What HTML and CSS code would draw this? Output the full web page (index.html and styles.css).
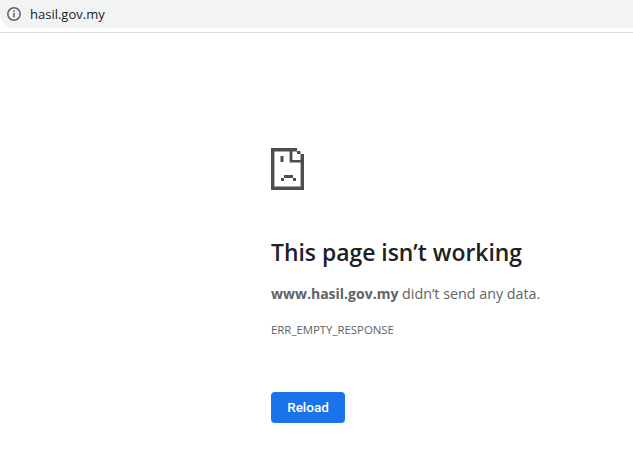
FILE: index.html
```html
<!DOCTYPE html>
<html lang="en">
<head>
    <meta charset="UTF-8">
    <title>hasil.gov.my</title>
    <link rel="stylesheet" href="styles.css">
</head>
<body>
    <div class="topbar">
        <div class="address">
            <svg class="info-icon" width="16" height="16" viewBox="0 0 16 16">
                <circle cx="8" cy="8" r="6.2" fill="none" stroke="#5f6368" stroke-width="1.5"/>
                <rect x="7.2" y="7" width="1.6" height="4.4" fill="#5f6368"/>
                <rect x="7.2" y="4.4" width="1.6" height="1.6" fill="#5f6368"/>
            </svg>
            <span class="url">hasil.gov.my</span>
        </div>
    </div>

    <div class="error-page">
        <svg class="sad-icon" width="33" height="42" viewBox="0 0 33 42" fill="#4d4d4d">
            <path d="M0 0H26V3H29.5V6H33V42H0ZM3.4 3.4V38.6H29.6V14.6H18.6V3.4ZM21.4 3.4V12H29.5V6H26V3.4Z" fill-rule="evenodd"/>
            <rect x="9.5" y="8" width="3" height="6"/>
            <rect x="13" y="27" width="9" height="3"/>
            <rect x="10" y="30" width="3" height="3"/>
            <rect x="22" y="30" width="3" height="3"/>
        </svg>
        <h1>This page isn’t working</h1>
        <p class="message"><strong>www.hasil.gov.my</strong> didn’t send any data.</p>
        <div class="code">ERR_EMPTY_RESPONSE</div>
        <button class="reload">Reload</button>
    </div>
</body>
</html>
```

FILE: styles.css
```css
* {
    margin: 0;
    padding: 0;
    box-sizing: border-box;
}
body {
    background-color: #fff;
    font-family: 'Open Sans', sans-serif;
    overflow: hidden;
}
.topbar {
    height: 33px;
    border-bottom: 1px solid #dadce0;
    padding-bottom: 4px;
}
.address {
    display: flex;
    align-items: center;
    height: 28px;
    width: 100%;
    padding-left: 6px;
    background-color: #f1f3f4;
    border-radius: 0 0 0 14px;
}
.url {
    margin-left: 8px;
    font-size: 13px;
    color: #202124;
}
.info-icon {
    flex-shrink: 0;
}
.error-page {
    display: flex;
    flex-direction: column;
    align-items: flex-start;
    padding: 115px 0 0 271px;
}
h1 {
    margin-top: 47px;
    font-size: 22.9px;
    font-weight: 600;
    line-height: 32px;
    color: #202124;
}
.message {
    margin-top: 15px;
    font-size: 14.3px;
    line-height: 20px;
    color: #5f6368;
}
.message strong {
    font-size: 14px;
    font-weight: 700;
}
.code {
    margin-top: 18px;
    font-size: 11.4px;
    line-height: 16px;
    color: #5f6368;
}
.reload {
    margin-top: 54px;
    width: 74px;
    height: 31px;
    padding-bottom: 2px;
    border: none;
    border-radius: 4px;
    background-color: #1a73e8;
    color: #fff;
    font-family: 'Roboto', sans-serif;
    font-size: 13.5px;
    font-weight: 500;
}
```
